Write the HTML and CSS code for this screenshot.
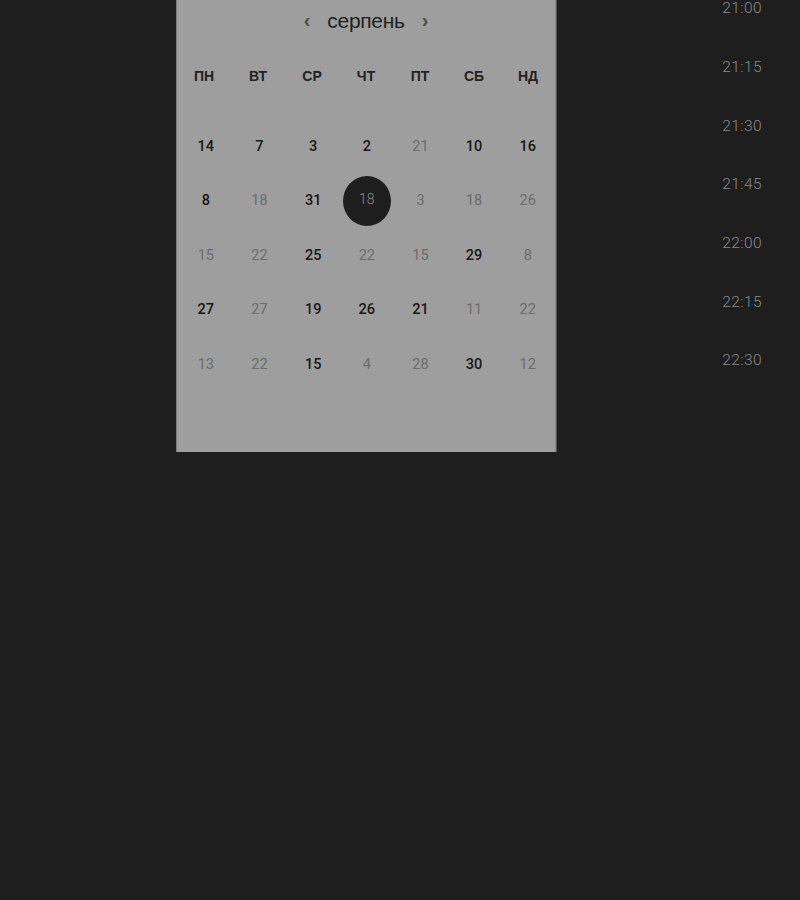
FILE: index.html
```html
<!DOCTYPE html>
<html lang="uk">
<head>
<meta charset="utf-8">
<link rel="stylesheet" href="styles.css">
</head>
<body>
<div class="page">
  <div class="panel">
    <div class="head">
      <span class="arrow">‹</span>
      <span class="month">серпень</span>
      <span class="arrow">›</span>
    </div>
    <div class="weekdays">
      <span>ПН</span><span>ВТ</span><span>СР</span><span>ЧТ</span><span>ПТ</span><span>СБ</span><span>НД</span>
    </div>
    <div class="days">
      <span class="d">14</span><span class="d">7</span><span class="d">3</span><span class="d">2</span><span class="m">21</span><span class="d">10</span><span class="d">16</span>
      <span class="d">8</span><span class="m">18</span><span class="d">31</span><span class="sel"><i>18</i></span><span class="m">3</span><span class="m">18</span><span class="m">26</span>
      <span class="m">15</span><span class="m">22</span><span class="d">25</span><span class="m">22</span><span class="m">15</span><span class="d">29</span><span class="m">8</span>
      <span class="d">27</span><span class="m">27</span><span class="d">19</span><span class="d">26</span><span class="d">21</span><span class="m">11</span><span class="m">22</span>
      <span class="m">13</span><span class="m">22</span><span class="d">15</span><span class="m">4</span><span class="m">28</span><span class="d">30</span><span class="m">12</span>
    </div>
  </div>
  <div class="times">
    <div class="t">21:00</div>
    <div class="t">21:15</div>
    <div class="t">21:30</div>
    <div class="t">21:45</div>
    <div class="t">22:00</div>
    <div class="t">22:15</div>
    <div class="t">22:30</div>
  </div>
</div>
</body>
</html>
```
FILE: styles.css
```css
html, body {
  margin: 0;
  padding: 0;
  background: #1e1e1e;
  height: 100%;
}
body {
  font-family: Roboto, "Liberation Sans", Arial, sans-serif;
}
.page {
  display: flex;
  align-items: flex-start;
  padding-left: 176px;
}
.panel {
  width: 378px;
  height: 452px;
  box-sizing: content-box;
  background: #9e9e9e;
  border-left: 1px solid #7c7c7c;
  border-right: 1px solid #8a8a8a;
  box-shadow: 1px 0 0 #555;
  display: flex;
  flex-direction: column;
}
.head {
  height: 40px;
  display: flex;
  align-items: center;
  justify-content: center;
  gap: 17px;
  padding-top: 1px;
}
.arrow {
  color: #4e4e4e;
  font-family: "Liberation Sans", Arial, sans-serif;
  font-size: 20px;
  font-weight: 700;
  line-height: 1;
  margin-top: -3px;
}
.month {
  color: #1e1e1e;
  font-family: "Liberation Sans", Arial, sans-serif;
  font-size: 21px;
  font-weight: 400;
  letter-spacing: -0.3px;
}
.weekdays {
  margin-top: 8px;
  display: grid;
  grid-template-columns: repeat(7, 54px);
  height: 54px;
  align-items: center;
  justify-items: center;
  font-family: "Liberation Sans", Arial, sans-serif;
  font-size: 14px;
  font-weight: 700;
  color: #222;
}
.days {
  margin-top: 16px;
  padding-left: 2px;
  display: grid;
  grid-template-columns: repeat(7, 53.67px);
  grid-auto-rows: 54.5px;
  align-items: center;
  justify-items: center;
  font-size: 14.5px;
  font-weight: 500;
}
.d { color: #171717; }
.m { color: #6c6c6c; font-weight: 400; }
.sel {
  width: 48px;
  height: 50px;
  border-radius: 50%;
  background: #1e1e1e;
  display: flex;
  align-items: center;
  justify-content: center;
}
.sel i {
  font-style: normal;
  color: #8e8e8e;
  font-weight: 300;
  font-size: 14px;
  margin-top: -3px;
}
.times {
  margin-left: auto;
  margin-right: 38px;
  margin-top: -21px;
  display: flex;
  flex-direction: column;
}
.t {
  height: 58.7px;
  display: flex;
  align-items: center;
  justify-content: center;
  color: #8a8a8a;
  font-size: 15.5px;
  font-weight: 300;
  letter-spacing: 0.4px;
}
```
